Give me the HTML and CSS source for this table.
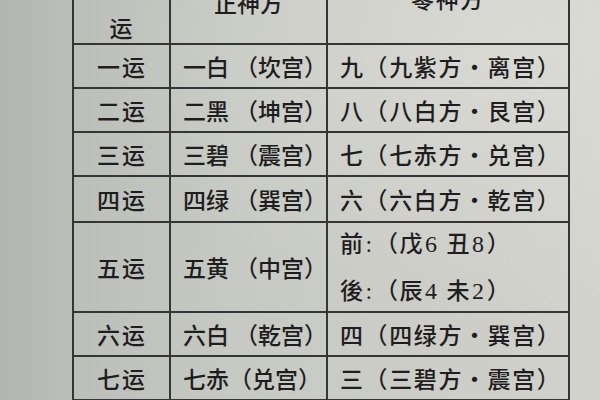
FILE: index.html
```html
<!DOCTYPE html>
<html lang="zh">
<head>
<meta charset="utf-8">
<title>元运 正神方 零神方</title>
<link rel="stylesheet" href="styles.css">
</head>
<body>
<div class="page">
  <table class="yun">
    <tr class="head">
      <td class="c1"><div class="stack"><span>元</span><span>运</span></div></td>
      <td class="c2 center">正神方</td>
      <td class="c3 center up">零神方</td>
    </tr>
    <tr class="r"><td class="c1">一运</td><td class="c2">一白<span class="gap"></span>（坎宫）</td><td class="c3">九（九紫方・离宫）</td></tr>
    <tr class="r"><td class="c1">二运</td><td class="c2">二黑<span class="gap"></span>（坤宫）</td><td class="c3">八（八白方・艮宫）</td></tr>
    <tr class="r"><td class="c1">三运</td><td class="c2">三碧<span class="gap"></span>（震宫）</td><td class="c3">七（七赤方・兑宫）</td></tr>
    <tr class="r r4"><td class="c1">四运</td><td class="c2">四绿<span class="gap"></span>（巽宫）</td><td class="c3">六（六白方・乾宫）</td></tr>
    <tr class="r r5"><td class="c1">五运</td><td class="c2">五黄<span class="gap"></span>（中宫）</td><td class="c3"><div class="two"><span>前<span class="num">:</span>（戊<span class="num">6</span> 丑<span class="num">8</span>）</span><span>後<span class="num">:</span>（辰<span class="num">4</span> 未<span class="num">2</span>）</span></div></td></tr>
    <tr class="r"><td class="c1">六运</td><td class="c2">六白<span class="gap"></span>（乾宫）</td><td class="c3">四（四绿方・巽宫）</td></tr>
    <tr class="r"><td class="c1">七运</td><td class="c2">七赤（兑宫）</td><td class="c3">三（三碧方・震宫）</td></tr>
  </table>
</div>
</body>
</html>
```
FILE: styles.css
```css
html, body {
  margin: 0;
  padding: 0;
}
body {
  width: 600px;
  height: 400px;
  overflow: hidden;
  background:
    radial-gradient(ellipse at 85% 10%, rgba(228,228,222,0.5), rgba(228,228,222,0) 55%),
    linear-gradient(to right, #b2b5af 0%, #bcbfb9 12%, #c7c9c3 40%, #cdcec8 80%, #d2d3cd 100%);
  font-family: "Noto Sans CJK SC", "Noto Sans CJK JP", sans-serif;
  font-weight: 500;
  color: #1e1e1e;
}
.page {
  padding-left: 72px;
  margin-top: -41px;
}
.yun {
  border-collapse: collapse;
  table-layout: fixed;
  width: 498px;
  font-size: 23px;
  line-height: 1;
}
.yun td {
  border: 2px solid #353535;
  padding: 0;
  vertical-align: middle;
  white-space: nowrap;
}
.c1 {
  width: 95px;
  text-align: center;
  letter-spacing: 2px;
  text-indent: 1px;
}
.c2 {
  width: 155px;
  text-align: left;
  padding-left: 12px !important;
}
.c3 {
  padding-left: 12px !important;
  text-align: left;
  letter-spacing: 1.6px;
}
.c2.center,
.c3.center {
  text-align: center;
  padding-left: 0 !important;
}
.up {
  padding-bottom: 8px !important;
}
.head {
  height: 84px;
}
.stack {
  height: 80px;
  display: flex;
  flex-direction: column;
  justify-content: space-between;
  align-items: center;
  padding: 0 0 3px;
  box-sizing: border-box;
}
.r {
  height: 44px;
}
.r4 {
  height: 46px;
}
.r5 {
  height: 90px;
}
.gap {
  display: inline-block;
  width: 6px;
}
.two {
  display: flex;
  flex-direction: column;
  gap: 22px;
}
.num {
  font-family: "Liberation Serif", serif;
  font-size: 24px;
  font-weight: 400;
  margin: 0 1px;
}
```
